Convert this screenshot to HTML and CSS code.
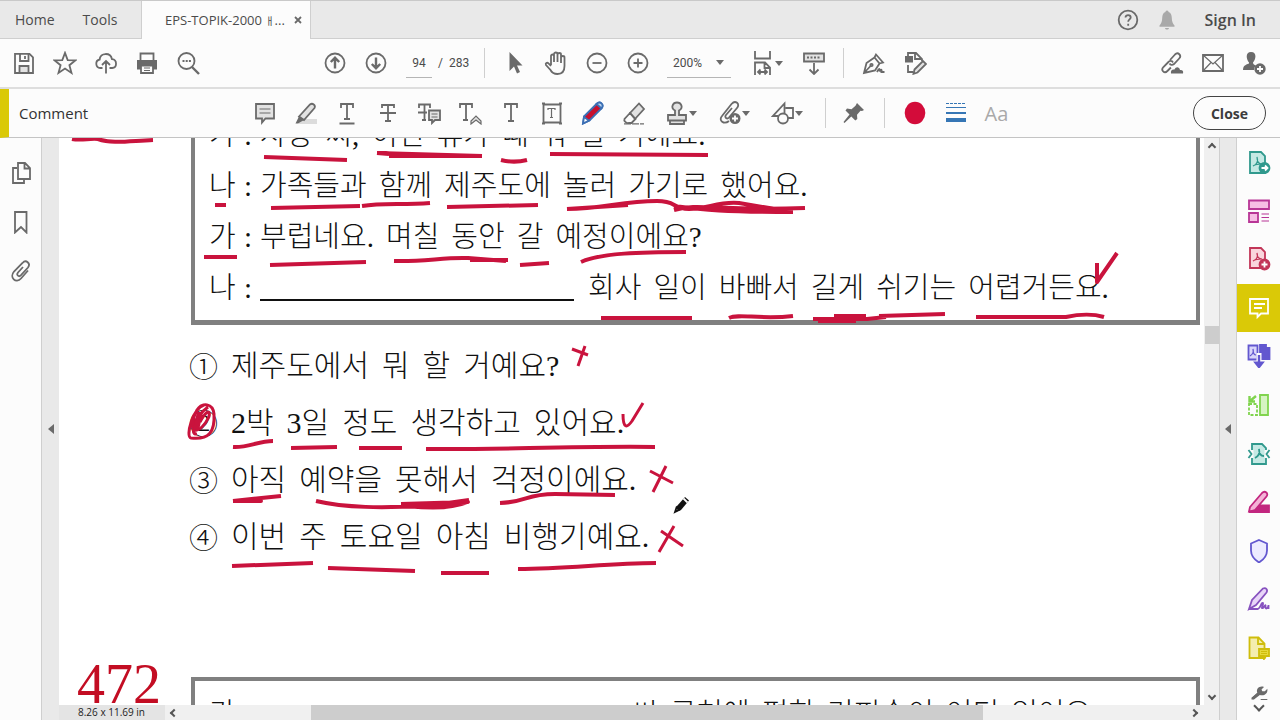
FILE: index.html
```html
<!DOCTYPE html>
<html lang="en">
<head>
<meta charset="utf-8">
<title>EPS-TOPIK-2000</title>
<link rel="stylesheet" href="styles.css">
</head>
<body>
<header class="tabs">
  <nav class="tabs-nav"><button class="tab">Home</button><button class="tab">Tools</button></nav>
  <div class="tab-file"><span>EPS-TOPIK-2000 <small>ㅐ</small>...</span><button class="tab-x" aria-label="Close tab"><svg viewBox="0 0 8 8"><path d="M1 1l6 6M7 1L1 7"/></svg></button></div>
  <div class="tabs-end">
    <button class="btn" aria-label="Help"><svg viewBox="0 0 24 24"><circle cx="12" cy="12" r="9.3"/><path d="M9.5 9.6c0-3.4 5.2-3.2 5.2-.1 0 1.9-2.5 2-2.5 4.2M12.200 15.700v2"/></svg></button>
    <button class="btn bell" aria-label="Notifications"><svg viewBox="0 0 24 24"><path class="solid" d="M12 2.500c1.200 0 1.500.8 1.500 1.600 2.500.8 3.200 3 3.300 6 .1 3.500.9 5.600 2.700 7.400v1.200h-15v-1.200c1.800-1.800 2.600-3.900 2.700-7.400.1-3 .8-5.200 3.300-6 0-.8.300-1.600 1.500-1.600zM10 20h4c-.3 2-3.700 2-4 0z"/></svg></button>
    <button class="signin">Sign In</button>
  </div>
</header>

<div class="toolbar">
  <button class="btn" aria-label="Save"><svg viewBox="0 0 24 24"><path d="M3 2.900h14.500l3.500 3.500v15.600H3z"/><path d="M8 3v7h8.500V3"/><path d="M13 5v3"/><path class="soft" d="M7.500 22v-7h9v7z"/></svg></button>
  <button class="btn" aria-label="Star"><svg viewBox="0 0 24 24"><path d="M12 1.900l2.700 7.200 7.700.3-6 4.800 2.100 7.700-6.500-4.400-6.500 4.400 2.100-7.700-6-4.800 7.700-.3z"/></svg></button>
  <button class="btn" aria-label="Upload"><svg viewBox="0 0 24 24"><path d="M8.500 17H6.300a4.300 4.300 0 0 1-.6-8.500C6 1.500 16.500 1 18 8.200c5.500.6 5.200 8.600.2 8.800h-2.700M12 22.500V10.500M8 14l4-4 4 4"/></svg></button>
  <button class="btn" aria-label="Print"><svg viewBox="0 0 24 24"><path class="solid" d="M2 9h20v9.500h-4V14H6v4.500H2z"/><path d="M5.500 9V2.500h13V9M6 14.500h12V22H6z"/><path class="thin" d="M9 17h6M9 19.500h6"/></svg></button>
  <button class="btn" aria-label="Search"><svg viewBox="0 0 24 24"><circle cx="10.500" cy="10" r="8"/><path d="M16 16l7 7" class="bold"/><path class="solid" d="M6.500 9h2v2h-2zM9.700 9h2v2h-2zM12.900 9h2v2h-2z"/></svg></button>

  <div class="group group-pages">
    <button class="btn" aria-label="Previous page"><svg viewBox="0 0 24 24"><circle cx="12" cy="12" r="9.500"/><path class="bold" d="M12 17.500V7M7.800 11L12 6.800l4.200 4.200"/></svg></button>
    <button class="btn" aria-label="Next page"><svg viewBox="0 0 24 24"><circle cx="12" cy="12" r="9.500"/><path class="bold" d="M12 6.500V17M7.800 13l4.200 4.200 4.200-4.200"/></svg></button>
    <input class="page-no" value="94" aria-label="Page number"><span class="page-total">/&nbsp; 283</span>
  </div>
  <i class="sep"></i>
  <div class="group group-view">
    <button class="btn" aria-label="Select"><svg viewBox="0 0 24 24"><path class="solid" d="M6.500 1v19l4.500-4.500 3 7 3-1.500-3-6.500h5.500z"/></svg></button>
    <button class="btn" aria-label="Hand"><svg viewBox="0 0 24 24"><path d="M7 14V5c0-2 3-2 3 0v6M10 11V3c0-2 3.500-2 3.500 0v8M13.500 11V3.500c0-2 3.500-2 3.500 0V12M17 12V6.500c0-2 3.500-2 3.500 0V15c0 5-2.500 8-7 8-3.500 0-5.500-1-7-4L2 14c-.9-1.800 1-3 2.500-1.600L7 15"/></svg></button>
    <button class="btn" aria-label="Zoom out"><svg viewBox="0 0 24 24"><circle cx="12" cy="12" r="9.500"/><path d="M7.500 12h9"/></svg></button>
    <button class="btn" aria-label="Zoom in"><svg viewBox="0 0 24 24"><circle cx="12" cy="12" r="9.500"/><path d="M7.500 12h9M12 7.500v9"/></svg></button>
    <button class="zoom">200%<b class="caret"></b></button>
    <button class="btn menu fit" aria-label="Fit width"><svg viewBox="0 0 24 24"><path d="M4 0v7.500h15V0M4 25V11.500h10l5 5V25M13.500 11.500V17H19M7 21h9M9.500 18.500L7 21l2.500 2.500M13.500 18.500L16 21l-2.500 2.500"/></svg><b class="caret"></b></button>
    <button class="btn" aria-label="Keyboard"><svg viewBox="0 0 24 24"><path class="soft" d="M2 2.500h20v8H2z"/><path d="M12 12v11M7.500 18.500L12 23l4.500-4.500"/><path d="M5 6.500h14" stroke-dasharray="2 1.500"/></svg></button>
  </div>
  <i class="sep"></i>
  <div class="group group-sign">
    <button class="btn" aria-label="Sign"><svg viewBox="0 0 24 24"><path d="M2 22L4.500 12l8-5.500 5 6L13 19.500zM2 22l7-7.500M12.500 6.500l1.500-3 7 8-3.500 1"/><circle cx="9.500" cy="14" r="1.200"/><path d="M15 21c2-4 3-4 2.500-.5 2-3 2.500-2 2 .5h3"/></svg></button>
    <button class="btn" aria-label="Edit page"><svg viewBox="0 0 24 24"><path d="M5 6V2h8l6 6v2M12 2v6h6M5 14v7h5"/><path class="solid" d="M2 5h8v6.500H2z"/><path class="soft" d="M11.500 18.500L20 10l3 3-8.500 8.500-4 1.300z"/></svg></button>
  </div>
  <div class="end">
    <button class="btn" aria-label="Share link"><svg viewBox="0 0 24 24"><path d="M10 9l5-5.500c3-3 7 1 4.200 4L14 13c-1.700 1.500-3.500 1-4.500-.5M13 11.500c-1-1.800-3-2.200-4.600-.5l-5 5c-3 3.300 1 7 4 4l3.500-3.500"/><path class="solid" d="M11 22.500c-.5-3 1-4.500 3.500-4 1.500-3.500 5-2.500 5.500.5 3 0 3.500 1.500 3 3.500z"/></svg></button>
    <button class="btn" aria-label="Mail"><svg viewBox="0 0 24 24"><path d="M2 4h20v16H2z"/><path class="thin" d="M2 4l10 9 10-9M2 20l8-8.500M22 20l-8-8.500"/></svg></button>
    <button class="btn" aria-label="Add person"><svg viewBox="0 0 24 24"><path class="solid" d="M9 1c6.500 0 4.700 8 2 10.500 0 2 1.500 2.500 3 3-1.300 1.500-2 2.500-2 4.500H1c0-4 2-5 6-6.500v-1C4.300 8.500 3 1 9 1z"/><circle class="solid" cx="18" cy="18" r="5.700"/><path stroke="#fff" d="M18 15v6M15 18h6"/></svg></button>
  </div>
</div>

<div class="commentbar">
  <h1>Comment</h1>
  <div class="tools">
    <button class="btn" aria-label="Note"><svg viewBox="0 0 24 24"><path class="soft" d="M3 3h18v14.500h-8.500L9 21.500v-4H3z"/><path class="thin" d="M6.500 8h11M6.500 12h11"/></svg></button>
    <button class="btn" aria-label="Highlight"><svg viewBox="0 0 24 24"><path fill="#dcdcdc" stroke="none" d="M8 18h15v5H4z"/><path class="soft" d="M5 15.500L16 3.500c2.500-2 6 .7 4.500 3.500L10 19z"/><path class="solid" d="M5 15.500l5 3.500-6 3.500H1.500z"/></svg></button>
    <button class="btn" aria-label="Underline"><svg viewBox="0 0 24 24"><path d="M6 7V3h12v4M12 3v15M9 18h6M4.500 22.500h15"/></svg></button>
    <button class="btn" aria-label="Strikethrough"><svg viewBox="0 0 24 24"><path d="M6 7V4h12v3M12 4v16M9 20h6M4 12h16"/></svg></button>
    <button class="btn" aria-label="Replace text"><svg viewBox="0 0 24 24"><path d="M2 7V3.500h11V7M7.500 3.500v15M5 19h4M1 11.500h9"/><path class="soft" d="M12 9.500h11V19h-5l-3 3v-3h-3z"/><path class="thin" d="M14.500 13h6M14.500 16h6"/></svg></button>
    <button class="btn" aria-label="Insert text"><svg viewBox="0 0 24 24"><path d="M2 7V3h12v4M8 3v16M5 19h5"/><path class="soft thin" d="M13 23v-3l5-5 5 5v3l-5-4z"/></svg></button>
    <button class="btn" aria-label="Add text"><svg viewBox="0 0 24 24"><path d="M6 7V3h12v4M12 3v17M9 20h6"/></svg></button>
    <button class="btn" aria-label="Text box"><svg viewBox="0 0 24 24"><path d="M3.500 3.500h17v18h-17zM2 2.500h3M19 2.500h3M2 22.500h3M19 22.500h3"/><path class="thin" d="M8 9V7.500h7V9M11.500 7.500v9M10 16.500h3"/></svg></button>
    <button class="btn" aria-label="Draw"><svg viewBox="0 0 24 24"><path fill="#c8102e" stroke="#3c6fb4" d="M3 15.500L15.500 3c3.500-3.500 8 .5 5 4.500L8.500 19.500 2 22.500z"/><path fill="#b9d2ee" stroke="#3c6fb4" d="M15.500 3c3.500-3.500 8 .5 5 4.500z"/><path fill="#fff" stroke="#3c6fb4" d="M3 16l5 3.500-6 3z"/></svg></button>
    <button class="btn" aria-label="Erase"><svg viewBox="0 0 24 24"><path class="soft" d="M8 12L17 2.500l5 5.500L13 18z"/><path d="M8 12l-5.500 6c-1 2 2 4.500 4 4h3l4-4z"/><path class="thin" d="M2 22.800h20" stroke-dasharray="7 1"/></svg></button>
    <button class="btn menu" aria-label="Stamp"><svg viewBox="0 0 24 24"><path class="soft" d="M10 14V9.500c-5-3-2-8 2-8s7 5 2 8V14h7v5.500H3V14zM5 19.500h14V23H5z"/></svg><b class="caret"></b></button>
    <button class="btn menu" aria-label="Attach"><svg viewBox="0 0 24 24"><path d="M11 20c-5 4-11-.5-7-5L13.500 3c4-4.500 9 0 5.500 4l-8 9.500c-2 2.200-5-.2-3-2.500l6-7"/><circle class="solid" cx="17" cy="17.500" r="5.500"/><path stroke="#fff" d="M17 14.500v6M14 17.500h6"/></svg><b class="caret"></b></button>
    <button class="btn menu" aria-label="Shapes"><svg viewBox="0 0 24 24"><path d="M7 15H2L13.500 2.500V12M14.500 7h7.500v10h-5"/><circle cx="12" cy="17.500" r="5"/></svg><b class="caret"></b></button>
  </div>
  <i class="sep"></i>
  <button class="btn pin" aria-label="Pin"><svg viewBox="0 0 24 24"><path class="solid" d="M15 2l7 7-2 1-1.500-.3-3.500 4 .3 4.300-2 1.500-4-4L2.500 22l-1-1 6-7.500-4-4L5 7.500l4.500.7 4-3.500z"/></svg></button>
  <i class="sep"></i>
  <div class="group">
    <button class="btn" aria-label="Color"><svg viewBox="0 0 24 24"><ellipse fill="#d30c3a" stroke="none" cx="12" cy="12" rx="10.300" ry="11.300"/></svg></button>
    <button class="btn" aria-label="Line thickness"><svg viewBox="0 0 24 24"><path fill="#3676b5" stroke="none" d="M2 6h20v1H2zM2 11h20v2H2zM2 17h20v4H2z"/><path stroke="#3676b5" stroke-width="1" d="M2 2.500h20" stroke-dasharray="3 1"/></svg></button>
    <button class="btn aa">Aa</button>
  </div>
  <button class="close">Close</button>
</div>

<div class="workspace">
  <aside class="left-rail">
    <button aria-label="Pages"><svg viewBox="0 0 24 24"><path d="M9 2h7l5 5v11H9zM15.500 2v5.500H21M8 7H4v15h11v-3"/></svg></button>
    <button aria-label="Bookmarks"><svg viewBox="0 0 24 24"><path d="M6 2h11.500v20.500L12 17l-6 5.500z"/></svg></button>
    <button aria-label="Attachments"><svg viewBox="0 0 24 24"><path d="M14 8l-5 5.500c-2 2.500.8 5 3 2.700l7-7.700c3-4-2-8.500-5.500-4.500L5 12.500c-5 6 2 12.500 7 7l7-8"/></svg></button>
  </aside>
  <button class="gutter" aria-label="Collapse left panel"><b class="tri"></b></button>

  <main class="viewer">
    <div class="viewport">
      <article class="sheet" lang="ko">
        <section class="question">
          <div class="dialogue">
            <p><span class="who">가</span><span class="colon">:</span><span>사랑</span><span>씨,</span><span>이번</span><span>휴가</span><span>때</span><span>뭐</span><span>할</span><span>거예요.</span></p>
            <p><span class="who">나</span><span class="colon">:</span><span>가족들과</span><span>함께</span><span>제주도에</span><span>놀러</span><span>가기로</span><span>했어요.</span></p>
            <p><span class="who">가</span><span class="colon">:</span><span>부럽네요.</span><span>며칠</span><span>동안</span><span>갈</span><span>예정이에요?</span></p>
            <p><span class="who">나</span><span class="colon">:</span><span class="blank"></span><span>회사</span><span>일이</span><span>바빠서</span><span>길게</span><span>쉬기는</span><span>어렵거든요.</span></p>
          </div>
          <ol class="choices">
            <li><span class="mark">①</span><span>제주도에서</span><span>뭐</span><span>할</span><span>거예요?</span></li>
            <li><span class="mark">②</span><span>2박</span><span>3일</span><span>정도</span><span>생각하고</span><span>있어요.</span></li>
            <li><span class="mark">③</span><span>아직</span><span>예약을</span><span>못해서</span><span>걱정이에요.</span></li>
            <li><span class="mark">④</span><span>이번</span><span>주</span><span>토요일</span><span>아침</span><span>비행기예요.</span></li>
          </ol>
        </section>
        <section class="question next">
          <h2>472</h2>
          <div class="dialogue">
            <p><span class="who">가</span><span class="colon"></span><span class="blank wide"></span><span>씨</span><span>근처에</span><span>편한</span><span>커피숍이</span><span>어디</span><span>있어요?</span></p>
          </div>
        </section>
      </article>
      <svg class="ink" viewBox="59 138 1144 567" aria-hidden="true">
        <path d="M72 139c10 2 17-1 26 0 14 5 30 2 55 1"/>
        <path d="M264 157l83 3M377 153l12 1M389 156l93 0M377 153l105 3M501 160c8 2 18 2 26 0M550 154l158 1"/>
        <path d="M215 205h11M271 208l89-2M362 206c20-3 40-1 68-3M447 207l91-2"/>
        <path d="M567 209c35 0 55-8 90-8 20 0 14 7 32 8 18 0 30-8 50-6l42 7M567 209l61-4M674 210c25-7 40 1 131-2M674 206c30 4 50 6 119 6"/>
        <path d="M204 257h33M270 265l96-3M394 261c30 1 50-4 74-3l38 3M470 260h38M520 265l29-2M581 262c20-9 60-10 105-10"/>
        <path d="M601 318h91M729 318c10-5 30 2 64-2M813 319h54l19-2M879 316l66-2M976 317h90c14-3 28-3 38 0M1097 263v19l20-29"/>
        <path class="thick" d="M818 320h38M834 317h32"/>
        <path class="fine" d="M572 349l16 6M585 346l-7 20"/>
        <path class="fine" d="M623 414c0 15 4 14 9 7l11-18"/>
        <path class="fine" d="M204 405c-11 3-19 32-13 33 18 2 24-6 23-24-1-11-12-12-17-4-10 20-2 24 5 17 12-12 8-24-2-5M208 407c-16 12-18 28-11 27"/>
        <path class="thick" d="M200 412l-4 18"/>
        <path d="M233 447c15 1 25-6 40-6M291 448l46-1M359 448h43M426 449c70 1 140-3 229-2"/>
        <path d="M233 501l48-5M233 501h28l-10-2M316 501c30 7 65 7 110 5l43-6M401 504l67-2c-15 6-40 7-67 3M500 503c28-1 25-9 55-9l60 1"/>
        <path class="fine" d="M650 471l23 12M666 466l-13 26M661 531l22 15M674 526l-15 26"/>
        <path d="M232 566l81-3M328 568l87 3M441 573h48M518 569c50 0 90-6 138-6"/>
      </svg>
      <svg class="cursor" viewBox="0 0 18 20" aria-hidden="true"><path d="M2 18l2-6L12 3l4 3.500L8 16z" fill="#111"/><path d="M2 18l1.500-4.500L6 16z" fill="#fff" stroke="#111"/><path d="M10.500 4.500l4 4" stroke="#fff"/></svg>
    </div>
    <div class="vscroll"><i class="chev up"></i><b class="thumb"></b><i class="chev down"></i></div>
    <div class="hscroll">
      <span class="size">8.26 x 11.69 in</span><i class="chev left"></i><div class="track"><b></b></div><i class="chev right"></i>
    </div>
    <div class="corner"></div>
  </main>

  <button class="gutter gutter-r" aria-label="Collapse right panel"><b class="tri"></b></button>
  <aside class="right-rail">
    <button aria-label="Export PDF"><svg viewBox="0 0 24 24" stroke="#30998d"><path fill="#c5e9e4" d="M3 2h11l4 4v17H3z"/><path class="thin" d="M6 16c5-2 5-6 4-9 0 5 2 7 5 7-4 0-6 0-9 2z"/><circle fill="#30998d" cx="17.500" cy="18" r="5"/><path stroke="#fff" d="M14.500 18h6M18 15.500l2.500 2.500-2.500 2.500"/></svg></button>
    <button aria-label="Organize pages"><svg viewBox="0 0 24 24" stroke="#b83596"><path fill="#f7bde4" d="M2 1.500h20V10H2zM2 14h9v9H2z"/><path class="thin" d="M14.500 15H22M14.500 18.500H22M14.500 22H22"/></svg></button>
    <button aria-label="Create PDF"><svg viewBox="0 0 24 24" stroke="#c23658"><path fill="#f9d6dd" d="M3 1h11l4 4v16H3z"/><path class="thin" d="M6 14c5-2 5-5 4-8 0 5 2 6 5 6-4 0-6 0-9 2z"/><circle fill="#c23658" cx="17.500" cy="17.500" r="5"/><path stroke="#fff" d="M17.500 14.500v6M14.500 17.500h6"/></svg></button>
    <button class="on" aria-label="Comment"><svg viewBox="0 0 24 24" stroke="#fff"><path d="M3 3h18v14.500h-7L10.500 21v-3.500H3z"/><path d="M7 8h11M7 12h8"/></svg></button>
    <button aria-label="Combine files"><svg viewBox="0 0 24 24" stroke="#6257cf"><path fill="#d9d5fa" d="M1.500 1.500h9v14h-9z"/><path fill="#6257cf" d="M13 1h6v3h3.500v11H13z"/><path class="thin" d="M3 12c3-2 4-4 3-7 0 4 1 6 3 6"/><path class="gap" d="M12 9v13"/><path class="bold" d="M12 11v9"/><path fill="#6257cf" d="M8 18.500h8l-4 5z"/></svg></button>
    <button aria-label="Compress"><svg viewBox="0 0 24 24" stroke="#80d44e"><path fill="#d6f4c2" d="M13 2h8v20h-8z"/><path d="M2 10v12h8V11H2" stroke-dasharray="3 1.500"/><path class="bold" d="M9 3L3 8M2.500 3v5.500H8"/></svg></button>
    <button aria-label="Optimize PDF"><svg viewBox="0 0 24 24" stroke="#30998d"><path fill="#c5e9e4" d="M5 2h10l4 4v16H5z"/><path stroke="#fafafa" stroke-width="4" d="M4.500 8v8M19.500 8v8"/><path d="M1.500 8l3 4-3 4M22.500 8l-3 4 3 4M8 16c4-2 5-5 4-9 0 5 2 7 5 7"/></svg></button>
    <button aria-label="Redact"><svg viewBox="0 0 24 24" stroke="#c2267f"><path fill="#f4b2d7" d="M3 17L15 3c3-3 7 .5 4.500 3.500L8 20l-6 1.500z"/><path fill="#c2267f" d="M9 20.500l4-5h9V22H2z"/></svg></button>
    <button aria-label="Protect"><svg viewBox="0 0 24 24" stroke="#6257cf"><path fill="#ecebff" d="M12 1l8 3.500v7c0 6-4 9.500-8 12-4-2.500-8-6-8-12v-7z"/></svg></button>
    <button aria-label="Fill and sign"><svg viewBox="0 0 24 24" stroke="#8752bf"><path fill="#e8d5f8" d="M2 22l3-9L16 1.500c3-1.500 5 1.500 3.500 4L9 18z"/><path d="M2 22h9c3-1 3-7 5-6 1 2-3 6 0 5 2-2 3-5 2.500-1-.3 3 3 1 3-2v4"/></svg></button>
    <button aria-label="Send for comments"><svg viewBox="0 0 24 24" stroke="#cfbd0c"><path fill="#f4edb0" d="M2.500 1.500h9l6 6V22h-15z"/><path d="M11 1.500V8h6.500"/><path fill="#e6d93c" d="M12 13h10v7h-3l-2 3v-3h-5z"/><path class="thin" d="M14 15.500h6M14 17.500h6"/></svg></button>
    <div class="more"><svg viewBox="0 0 24 24"><path class="bold" d="M4 20L13 12"/><path class="solid" d="M10 13c-2-5 3-9 8-7l-3 3 1 2 3 0 3-3c1 6-4 9-9 7.500L6 21H3v-2z"/><path class="thin" d="M14 21h8"/></svg><i class="chev down"></i></div>
  </aside>
</div>
</body>
</html>
```

FILE: styles.css
```css
* { box-sizing: border-box; }

body {
  margin: 0;
  height: 100vh;
  display: flex;
  flex-direction: column;
  overflow: hidden;
  background: #fcfcfc;
  color: #4b4b4b;
  font: 14px "Open Sans", "Noto Sans", "Noto Sans CJK KR", sans-serif;
}

button {
  margin: 0;
  padding: 0;
  border: 0;
  background: none;
  color: inherit;
  font: inherit;
}

svg {
  display: block;
  width: 24px;
  height: 24px;
  flex: none;
  fill: none;
  stroke: #6a6a6a;
  stroke-width: 1.8;
}
svg[stroke="#30998d"] { stroke: #30998d; }
svg[stroke="#b83596"] { stroke: #b83596; }
svg[stroke="#c23658"] { stroke: #c23658; }
svg[stroke="#fff"] { stroke: #fff; }
svg[stroke="#6257cf"] { stroke: #6257cf; }
svg[stroke="#80d44e"] { stroke: #80d44e; }
svg[stroke="#c2267f"] { stroke: #c2267f; }
svg[stroke="#8752bf"] { stroke: #8752bf; }
svg[stroke="#cfbd0c"] { stroke: #cfbd0c; }

.solid { fill: #6a6a6a; stroke: none; }
.soft { fill: #e2e2e2; }
.thin { stroke-width: 1.2; }
.bold { stroke-width: 2.4; }
.gap { stroke: #fcfcfc; stroke-width: 5; }

/* Tab strip */
.tabs {
  display: flex;
  height: 39px;
  flex: none;
  background: #e9e9e9;
  border-top: 1px solid #c9c9c9;
}
.tabs-nav {
  display: flex;
  gap: 28px;
  width: 142px;
  padding-left: 15px;
  border-right: 1px solid #cfcfcf;
  border-bottom: 1px solid #cfcfcf;
}
.tab-file {
  display: flex;
  align-items: center;
  justify-content: space-between;
  width: 168px;
  padding: 0 8px 0 23px;
  background: #fcfcfc;
  font-size: 13px;
}
.tab-file small { font-size: 10px; }
.tab-x svg { width: 8px; height: 8px; }
.tabs-end {
  display: flex;
  flex: 1;
  align-items: center;
  justify-content: flex-end;
  padding-right: 24px;
  border-left: 1px solid #cfcfcf;
  border-bottom: 1px solid #cfcfcf;
}
.bell .solid { fill: #a9a9a9; }
.signin { margin-left: 18px; font-size: 16px; font-weight: 600; }

/* Toolbars */
.btn {
  display: flex;
  align-items: center;
  justify-content: center;
  width: 41px;
  height: 41px;
  flex: none;
}
.btn.menu { width: 53px; }
.tabs-end .btn { width: 39px; height: 37px; }
.caret {
  border: 4px solid transparent;
  border-top: 5px solid #6a6a6a;
  border-bottom: 0;
}
.sep { width: 1px; height: 30px; flex: none; background: #cfcfcf; }
.group { display: flex; align-items: center; }

.toolbar {
  display: flex;
  align-items: center;
  height: 50px;
  flex: none;
  padding-left: 3px;
  border-bottom: 2px solid #dedede;
  font-family: Roboto, "Open Sans", sans-serif;
  font-size: 12px;
}
.group-pages { margin: 0 17px 0 106px; }
.page-no {
  width: 26px;
  height: 30px;
  margin-left: 10px;
  padding: 0;
  border: 0;
  border-bottom: 1px solid #b5b5b5;
  background: none;
  color: inherit;
  font: inherit;
  text-align: center;
}
.page-total { width: 35px; padding-left: 6px; white-space: nowrap; }
.group-view { margin: 0 9px; }
.zoom {
  display: flex;
  align-items: center;
  justify-content: space-between;
  width: 64px;
  height: 30px;
  margin: 0 20px 0 9px;
  padding: 0 7px 0 6px;
  border-bottom: 1px solid #b5b5b5;
}
.btn.fit { width: 32px; margin-right: 10px; }
.group-sign { margin-left: 9px; }
.end { display: flex; margin-left: auto; padding-right: 6px; }

.commentbar {
  display: flex;
  align-items: center;
  height: 49px;
  flex: none;
  padding-right: 14px;
  border-left: 9px solid #dac907;
  border-bottom: 1px solid #c4c4c4;
}
h1 { width: 235px; margin: 0; padding-left: 10px; font-size: 15px; font-weight: 400; color: #333; }
.tools { display: flex; margin-right: 12px; }
.pin { margin: 0 10px 0 7px; }
.commentbar .group { margin-left: 9px; }
.aa { color: #a9a9a9; font-size: 20px; }
.close {
  width: 73px;
  height: 34px;
  margin-left: auto;
  border: 1px solid #444;
  border-radius: 17px;
  color: #3c3c3c;
  font-weight: 700;
}

/* Workspace */
.workspace { display: flex; flex: 1; min-height: 0; }
.left-rail {
  display: flex;
  flex-direction: column;
  gap: 25px;
  width: 41px;
  flex: none;
  padding: 23px 0 0 9px;
}
.gutter {
  display: flex;
  align-items: center;
  justify-content: center;
  width: 18px;
  flex: none;
  border-left: 1px solid #cfcfcf;
  background: #e9e9e9;
}
.gutter-r { border-right: 1px solid #cfcfcf; }
.tri { border: 5px solid transparent; border-right: 6px solid #6a6a6a; border-left: 0; }

.viewer {
  display: grid;
  grid-template: minmax(0, 1fr) 15px / minmax(0, 1fr) 15px;
  flex: 1;
  min-width: 0;
}
.viewport { position: relative; overflow: hidden; background: #fff; }
.sheet {
  margin-top: -28px;
  color: #111;
  font-family: "Liberation Serif", "Noto Sans CJK KR", sans-serif;
  font-size: 29px;
  font-weight: 300;
  white-space: nowrap;
}
.question { padding: 0 4px 0 132px; }
.dialogue { padding: 0 0 6px 14px; border: 4px solid #808080; border-top: 0; border-bottom-width: 5px; }
.dialogue p { display: flex; gap: 12px; margin: 0; line-height: 51px; }
.who { width: 27px; }
.colon { width: 8px; margin: 0 -4px; }
.blank { width: 314px; height: 38px; margin-right: 2px; border-bottom: 2px solid #111; }
.choices {
  margin: 12px 0 0;
  padding: 0;
  list-style: none;
  font-size: 30px;
  line-height: 57px;
}
.choices li { display: flex; gap: 13px; }
.mark { width: 29px; margin-left: -2px; font-size: 29px; font-family: "Noto Sans CJK KR", sans-serif; }
.next { display: flex; margin-top: 89px; padding-left: 18px; }
h2 { width: 114px; margin: 0; color: #c30d23; font-size: 56px; font-weight: 400; line-height: 60px; }
.next .dialogue { flex: 1; margin-top: 23px; padding-top: 8px; border: 4px solid #808080; }
.wide { width: 357px; border: 0; }

.ink { position: absolute; top: 0; left: 0; width: 1144px; height: 567px; stroke: #c9133d; stroke-width: 4; stroke-linejoin: round; }
.ink .thick { stroke-width: 6; }
.ink .fine { stroke-width: 3; }
.cursor { position: absolute; left: 614px; top: 356px; width: 18px; height: 20px; stroke: none; }

.vscroll {
  display: grid;
  grid-template-rows: 18px 1fr 18px;
  justify-items: center;
  align-items: center;
  background: #f0f0f0;
}
.thumb { width: 14px; height: 18px; margin-bottom: 174px; background: #cdcdcd; }
.chev { width: 6px; height: 6px; border: solid #555; border-width: 2px 0 0 2px; }
.up { transform: rotate(45deg); }
.down { transform: rotate(225deg); }
.left { transform: rotate(-45deg); }
.right { transform: rotate(135deg); }
.hscroll { display: flex; align-items: center; background: #f0f0f0; }
.size {
  width: 106px;
  height: 15px;
  padding-left: 19px;
  background: #e4e4e4;
  color: #222;
  font-size: 10px;
  line-height: 15px;
}
.hscroll .left { margin: 0 6px; }
.track { display: flex; flex: 1; height: 15px; padding-left: 128px; }
.track b { width: 77%; background: #cdcdcd; }
.hscroll .right { margin: 0 7px; }
.corner { background: #f0f0f0; }

/* Tool rail */
.right-rail { display: flex; flex-direction: column; width: 43px; flex: none; }
.right-rail button { display: flex; flex: 1; align-items: center; justify-content: center; }
.right-rail .on { background: #dac907; }
.more { display: flex; flex-direction: column; align-items: center; height: 48px; flex: none; padding-top: 10px; }
.more svg { width: 20px; height: 20px; }
.more .chev { width: 8px; height: 8px; }
```
